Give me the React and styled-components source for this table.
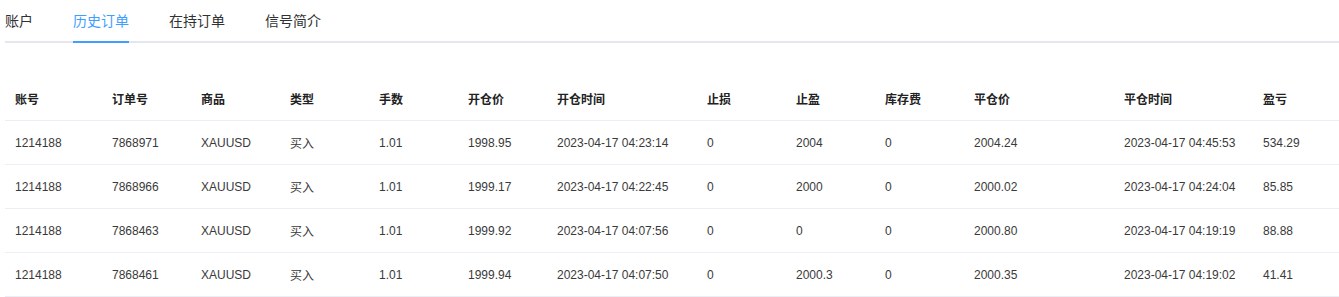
import React, { useState } from "react";
import styled, { createGlobalStyle } from "styled-components";

const GlobalStyle = createGlobalStyle`
  body {
    margin: 0;
    background: #fff;
    font-family: "Liberation Sans", Arial, "Noto Sans CJK SC", sans-serif;
  }
`;

const Page = styled.div`
  padding-left: 5px;
`;

const TabNav = styled.div`
  display: flex;
  height: 43px;
  box-shadow: inset 0 -2px 0 #e4e7ed;
`;

const TabItem = styled.div`
  padding: 0 20px;
  cursor: pointer;
  &:first-child {
    padding-left: 0;
  }
`;

const TabLabel = styled.span`
  display: block;
  box-sizing: border-box;
  height: 43px;
  line-height: 43px;
  font-size: 14px;
  color: ${(p) => (p.active ? "#409eff" : "#303133")};
  border-bottom: 2px solid ${(p) => (p.active ? "#409eff" : "transparent")};
`;

const Table = styled.table`
  margin-top: 34px;
  width: 1334px;
  border-collapse: collapse;
  table-layout: fixed;
  font-size: 12px;
`;

const Th = styled.th`
  height: 43px;
  padding: 0 10px;
  text-align: left;
  font-weight: bold;
  color: #222;
  border-bottom: 1px solid #ebeef5;
  white-space: nowrap;
`;

const Td = styled.td`
  height: 43px;
  padding: 0 10px;
  color: #3a3a3a;
  border-bottom: 1px solid #ebeef5;
  white-space: nowrap;
`;

const tabs = ["账户", "历史订单", "在持订单", "信号简介"];

const columns = [
  { title: "账号", width: 97 },
  { title: "订单号", width: 89 },
  { title: "商品", width: 89 },
  { title: "类型", width: 89 },
  { title: "手数", width: 89 },
  { title: "开仓价", width: 89 },
  { title: "开仓时间", width: 150 },
  { title: "止损", width: 89 },
  { title: "止盈", width: 89 },
  { title: "库存费", width: 89 },
  { title: "平仓价", width: 150 },
  { title: "平仓时间", width: 139 },
  { title: "盈亏", width: 86 },
];

const rows = [
  ["1214188", "7868971", "XAUUSD", "买入", "1.01", "1998.95", "2023-04-17 04:23:14", "0", "2004", "0", "2004.24", "2023-04-17 04:45:53", "534.29"],
  ["1214188", "7868966", "XAUUSD", "买入", "1.01", "1999.17", "2023-04-17 04:22:45", "0", "2000", "0", "2000.02", "2023-04-17 04:24:04", "85.85"],
  ["1214188", "7868463", "XAUUSD", "买入", "1.01", "1999.92", "2023-04-17 04:07:56", "0", "0", "0", "2000.80", "2023-04-17 04:19:19", "88.88"],
  ["1214188", "7868461", "XAUUSD", "买入", "1.01", "1999.94", "2023-04-17 04:07:50", "0", "2000.3", "0", "2000.35", "2023-04-17 04:19:02", "41.41"],
];

const App = () => {
  const [activeTab, setActiveTab] = useState(1);

  return (
    <Page>
      <GlobalStyle />
      <TabNav>
        {tabs.map((t, i) => (
          <TabItem key={t} onClick={() => setActiveTab(i)}>
            <TabLabel active={i === activeTab}>{t}</TabLabel>
          </TabItem>
        ))}
      </TabNav>
      <Table>
        <colgroup>
          {columns.map((c) => (
            <col key={c.title} width={c.width} />
          ))}
        </colgroup>
        <thead>
          <tr>
            {columns.map((c) => (
              <Th key={c.title}>{c.title}</Th>
            ))}
          </tr>
        </thead>
        <tbody>
          {rows.map((r) => (
            <tr key={r[1]}>
              {r.map((v, j) => (
                <Td key={j}>{v}</Td>
              ))}
            </tr>
          ))}
        </tbody>
      </Table>
    </Page>
  );
};

export default App;
